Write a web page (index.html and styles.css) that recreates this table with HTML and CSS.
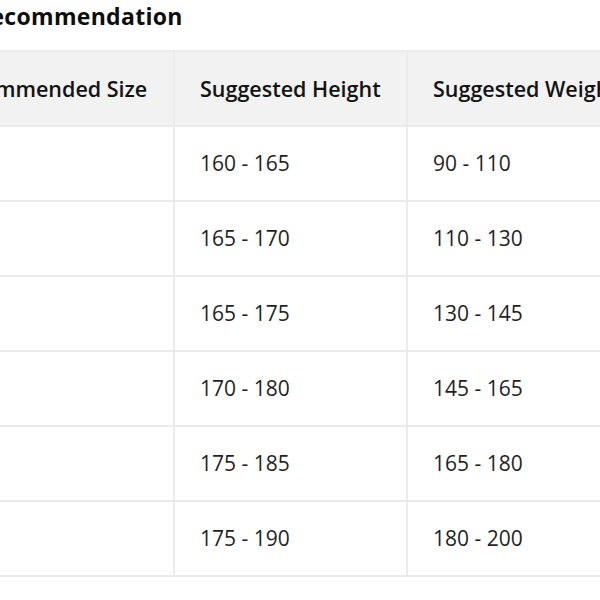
FILE: index.html
```html
<!DOCTYPE html>
<html>
<head>
<meta charset="utf-8">
<link rel="stylesheet" href="styles.css">
</head>
<body>
<div class="sheet">
  <h2 class="title">Recommendation</h2>
  <table class="size-table">
    <colgroup><col class="col-size"><col class="col-data"><col class="col-data"></colgroup>
    <thead>
      <tr><th>Recommended Size</th><th>Suggested Height</th><th>Suggested Weight</th></tr>
    </thead>
    <tbody>
      <tr><td>S</td><td>160 - 165</td><td>90 - 110</td></tr>
      <tr><td>M</td><td>165 - 170</td><td>110 - 130</td></tr>
      <tr><td>L</td><td>165 - 175</td><td>130 - 145</td></tr>
      <tr><td>XL</td><td>170 - 180</td><td>145 - 165</td></tr>
      <tr><td>2X</td><td>175 - 185</td><td>165 - 180</td></tr>
      <tr><td>3X</td><td>175 - 190</td><td>180 - 200</td></tr>
    </tbody>
  </table>
</div>
</body>
</html>
```
FILE: styles.css
```css
html, body {
  margin: 0;
  padding: 0;
  background: #ffffff;
  overflow: hidden;
}
.sheet {
  font-family: "Open Sans", "Noto Sans", sans-serif;
  color: #1a1a1a;
  margin-left: -82px;
}
.title {
  margin: 0 0 0 57px;
  padding: 0;
  font-size: 23px;
  line-height: 32px;
  letter-spacing: 0.3px;
  font-weight: 700;
  color: #0d0d0d;
  white-space: nowrap;
  height: 50px;
  box-sizing: border-box;
}
.size-table {
  border-collapse: collapse;
  table-layout: fixed;
  width: 721px;
}
.col-size { width: 255px; }
.col-data { width: 233px; }
.size-table th,
.size-table td {
  border: 2px solid #ebebeb;
  padding: 24px 10px 24px 25px;
  line-height: 25px;
  font-size: 21px;
  text-align: left;
  white-space: nowrap;
  overflow: hidden;
  box-sizing: border-box;
}
.size-table th {
  background: #f2f2f2;
  font-weight: 600;
  color: #141414;
  font-size: 21.5px;
}
.size-table td {
  font-weight: 400;
  color: #1f1f1f;
}
```
